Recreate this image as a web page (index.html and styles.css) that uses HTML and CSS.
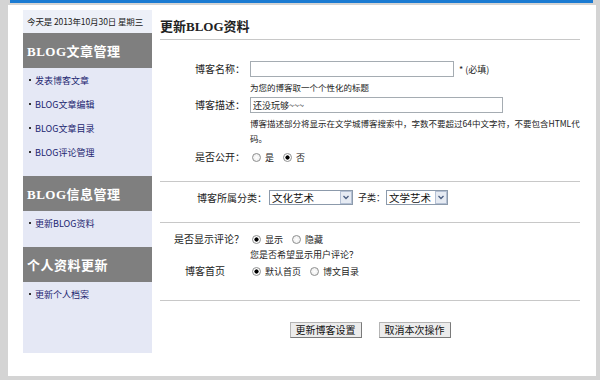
FILE: index.html
```html
<!DOCTYPE html>
<html lang="zh-CN">
<head>
    <meta charset="UTF-8">
    <title>更新BLOG资料</title>
    <link rel="stylesheet" href="styles.css">
</head>
<body>
    <div class="topbar"></div>
    <div class="page">
        <div class="sidebar">
            <div class="today">今天是 2013年10月30日 星期三</div>
            <div class="menu">
                <h3>BLOG文章管理</h3>
                <ul>
                    <li><a href="#">发表博客文章</a></li>
                    <li><a href="#">BLOG文章编辑</a></li>
                    <li><a href="#">BLOG文章目录</a></li>
                    <li><a href="#">BLOG评论管理</a></li>
                </ul>
            </div>
            <div class="menu">
                <h3>BLOG信息管理</h3>
                <ul>
                    <li><a href="#">更新BLOG资料</a></li>
                </ul>
            </div>
            <div class="menu last">
                <h3>个人资料更新</h3>
                <ul>
                    <li><a href="#">更新个人档案</a></li>
                </ul>
            </div>
        </div>
        <div class="main">
            <h2 class="title">更新BLOG资料</h2>
            <form>
                <div class="group basic">
                    <label class="lbl" for="blogName">博客名称：</label>
                    <div class="field">
                        <input class="text name" type="text" id="blogName">
                        <span class="req">* (必填)</span>
                    </div>
                    <div class="hint">为您的博客取一个个性化的标题</div>
                    <label class="lbl" for="blogDesc">博客描述：</label>
                    <div class="field">
                        <input class="text desc" type="text" id="blogDesc" value="还没玩够~~~">
                    </div>
                    <div class="hint long">博客描述部分将显示在文学城博客搜索中，字数不要超过64中文字符，不要包含HTML代码。</div>
                    <span class="lbl">是否公开：</span>
                    <div class="field">
                        <label class="opt"><input type="radio" name="public"> 是</label>
                        <label class="opt"><input type="radio" name="public" checked> 否</label>
                    </div>
                </div>
                <div class="group category">
                    <label class="lbl" for="cat">博客所属分类：</label>
                    <span class="select wide">
                        <select id="cat"><option>文化艺术</option></select>
                        <span class="arrow"><svg width="10" height="11" viewBox="0 0 10 11"><path d="M2.5 4 L5 6.5 L7.5 4" stroke="#4a5d80" stroke-width="1.3" fill="none"/></svg></span>
                    </span>
                    <label class="sub" for="subcat">子类：</label>
                    <span class="select">
                        <select id="subcat"><option>文学艺术</option></select>
                        <span class="arrow"><svg width="10" height="11" viewBox="0 0 10 11"><path d="M2.5 4 L5 6.5 L7.5 4" stroke="#4a5d80" stroke-width="1.3" fill="none"/></svg></span>
                    </span>
                </div>
                <div class="group extra">
                    <span class="lbl">是否显示评论？</span>
                    <div class="field">
                        <label class="opt"><input type="radio" name="comment" checked> 显示</label>
                        <label class="opt"><input type="radio" name="comment"> 隐藏</label>
                    </div>
                    <div class="hint">您是否希望显示用户评论？</div>
                    <span class="lbl">博客首页</span>
                    <div class="field">
                        <label class="opt"><input type="radio" name="home" checked> 默认首页</label>
                        <label class="opt"><input type="radio" name="home"> 博文目录</label>
                    </div>
                </div>
                <div class="buttons">
                    <button type="button">更新博客设置</button>
                    <button type="button">取消本次操作</button>
                </div>
            </form>
        </div>
    </div>
</body>
</html>
```

FILE: styles.css
```css
body {
    margin: 0;
    background-color: #d4d4d4;
    font-family: "Noto Sans CJK SC", "DejaVu Sans", sans-serif;
    color: #222;
    overflow: hidden;
}
.topbar {
    height: 3px;
    margin: 0 7px 0 10px;
    background-color: #1b7bd2;
}
.page {
    display: flex;
    width: 588px;
    height: 371px;
    margin: 2px 0 0 8px;
    background-color: #ffffff;
}

/* left menu */
.sidebar {
    display: flex;
    flex-direction: column;
    width: 129px;
    height: 343px;
    margin: 5px 0 0 15px;
    background-color: #e5e8f5;
}
.today {
    height: 23px;
    line-height: 23px;
    padding-left: 4px;
    font-size: 8.5px;
    letter-spacing: -0.1px;
    color: #222;
    background-color: #edf0f8;
    white-space: nowrap;
}
.menu h3 {
    margin: 0;
    height: 35px;
    line-height: 37px;
    padding-left: 4px;
    background-color: #7f7f7f;
    color: #ffffff;
    font-family: "Liberation Serif", "Noto Sans CJK SC", serif;
    font-size: 13px;
    font-weight: bold;
    letter-spacing: 0.5px;
}
.menu ul {
    list-style: none;
    margin: 0;
    padding: 0 0 12px;
}
.menu li {
    display: flex;
    align-items: center;
    height: 24px;
    padding-left: 6px;
    font-size: 9px;
}
.menu li::before {
    content: "";
    width: 2px;
    height: 2px;
    margin-right: 4px;
    background-color: #333;
}
.menu a {
    color: #1c2570;
    text-decoration: none;
}
.menu.last {
    flex: 1;
}

/* main form */
.main {
    width: 420px;
    margin-left: 8px;
}
.title {
    margin: 0;
    padding: 12px 0 2px;
    line-height: 20px;
    border-bottom: 1px solid #c8c8c8;
    font-family: "Liberation Serif", "Noto Sans CJK SC", serif;
    font-size: 13px;
    font-weight: bold;
    color: #222;
}
form {
    font-size: 10px;
}
.group {
    border-bottom: 1px solid #c8c8c8;
}
.basic {
    display: grid;
    grid-template-columns: 85px 1fr;
    column-gap: 5px;
    row-gap: 3px;
    padding: 21px 0 16px;
}
.basic .lbl {
    text-align: right;
    line-height: 16px;
}
.field {
    display: flex;
    align-items: center;
    height: 16px;
}
.hint {
    grid-column: 2;
    font-size: 8.5px;
    line-height: 14px;
    color: #222;
}
.hint.long {
    line-height: 15px;
    width: 333px;
}
.text {
    box-sizing: border-box;
    height: 16px;
    margin: 0;
    padding: 0 2px;
    border: 1px solid #a5acb2;
    font-family: inherit;
    font-size: 9px;
    color: #222;
    outline: none;
}
.text.name {
    width: 204px;
}
.text.desc {
    width: 253px;
}
.req {
    margin-left: 5px;
    font-size: 9px;
}
.opt {
    display: flex;
    align-items: center;
    margin-right: 7px;
    font-size: 9px;
}
.opt input {
    appearance: none;
    width: 9px;
    height: 9px;
    margin: 0 4px 0 2px;
    border: 1px solid #8e8f8f;
    border-radius: 50%;
    background: radial-gradient(circle, #ffffff 0, #e8e8e8 100%);
}
.opt input:checked {
    background: radial-gradient(circle, #000 0, #000 1.8px, #fff 2.4px);
}

.category {
    display: flex;
    align-items: center;
    padding: 8px 0 17px 37px;
}
.category .lbl {
    margin-right: 2px;
}
.sub {
    margin: 0 1px 0 5px;
    font-size: 9px;
}
.select {
    position: relative;
    display: inline-block;
    height: 15px;
}
.select select {
    appearance: none;
    box-sizing: border-box;
    width: 62px;
    height: 15px;
    margin: 0;
    padding: 0 0 0 2px;
    border: 1px solid #8c9aab;
    border-radius: 0;
    background-color: #fff;
    font-family: inherit;
    font-size: 10.5px;
    line-height: 13px;
    color: #111;
}
.select.wide select {
    width: 84px;
}
.select .arrow {
    position: absolute;
    top: 1px;
    right: 1px;
    box-sizing: border-box;
    width: 12px;
    height: 13px;
    border: 1px solid #b4c0d4;
    background-color: #e6ebf3;
    display: flex;
    align-items: center;
    justify-content: center;
}

.extra {
    display: grid;
    grid-template-columns: 90px 1fr;
    row-gap: 2px;
    padding: 9px 0 22px;
}
.extra .lbl {
    text-align: center;
    line-height: 14px;
}
.extra .lbl:first-child {
    padding-left: 8px;
}
.extra .field {
    height: 14px;
}
.extra .hint {
    font-size: 9px;
}

.buttons {
    display: flex;
    justify-content: center;
    gap: 17px;
    margin-top: 21px;
}
button {
    height: 16px;
    padding: 0 5px;
    border: 1px solid;
    border-color: #b5b5b5 #7a7a7a #7a7a7a #b5b5b5;
    background-color: #ececec;
    font-family: inherit;
    font-size: 10px;
    line-height: 14px;
    color: #111;
    cursor: pointer;
}
```
